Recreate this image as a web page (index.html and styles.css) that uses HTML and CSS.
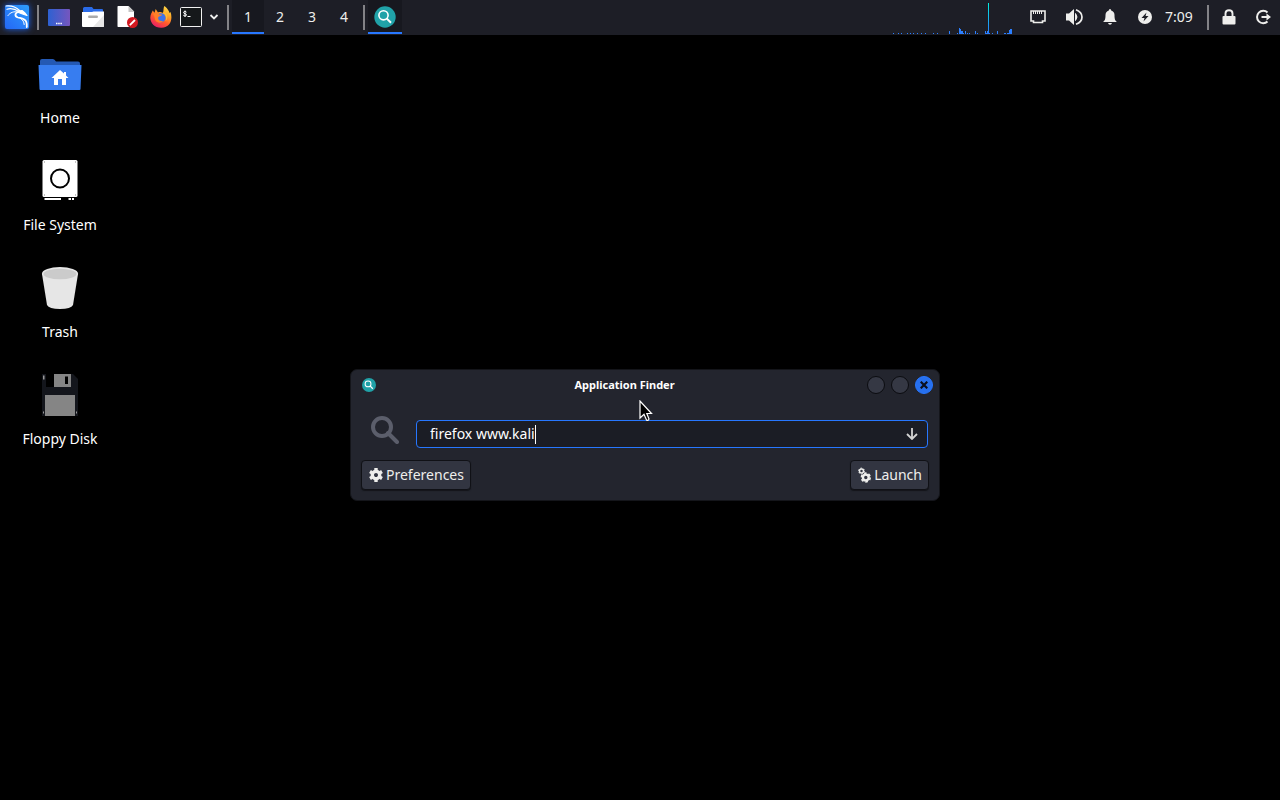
FILE: index.html
```html
<!DOCTYPE html>
<html lang="en">
<head>
<meta charset="utf-8">
<title>Desktop</title>
<link rel="stylesheet" href="styles.css">
</head>
<body>
<header class="panel">
  <button class="cell" aria-label="Applications menu">
    <svg class="menu-logo" width="34" height="34" viewBox="0 0 34 34">
      <defs><linearGradient id="lg" x1="0" y1="1" x2="1" y2="0"><stop offset="0" stop-color="#2467f5"/><stop offset="1" stop-color="#2d9dfc"/></linearGradient></defs>
      <rect x="5" y="5" width="24" height="24" rx="2" fill="url(#lg)"/>
      <g fill="none" stroke="#fff" stroke-linecap="round" stroke-linejoin="round">
        <path d="M6 6C11 5.500 16 7 19.500 10.500" stroke-width="1.200"/>
        <path d="M7 9.300C11 7.800 15 9 19 11.500" stroke-width="1.200"/>
        <path d="M8 15.500C10 12.500 14 11 18 12" stroke-width="1"/>
        <path d="M18 11L22 10.500L25 13L27 15.500L22.500 14L18.500 12.500" stroke-width="1.200" fill="#fff"/>
        <path d="M18.500 12C14.500 13 14.500 16.500 18 17.500C22 18.500 25 18.500 26.300 22C27 24 27 25.500 26.800 27" stroke-width="1.800"/>
        <path d="M20.500 18.500C23 20 24 22 24.200 24.500" stroke-width="1"/>
      </g>
    </svg>
  </button>
  <span class="sep"></span>
  <button class="cell" aria-label="Show desktop">
    <svg width="22" height="18" viewBox="0 0 22 18"><defs><linearGradient id="dg"><stop offset="0" stop-color="#2d61d2"/><stop offset="1" stop-color="#7656be"/></linearGradient></defs><rect width="22" height="17" y="1" rx="1" fill="url(#dg)"/><path d="M8 15.500h6" stroke="#fff" stroke-width="1.500" stroke-dasharray="1.500 .7"/></svg>
  </button>
  <button class="cell" aria-label="File manager">
    <svg width="22" height="20" viewBox="0 0 22 20"><path d="M1 6V1.500Q1 0 2.500 0H10L11.500 2H20Q21 2 21 3V7H1z" fill="#2a6be8"/><path d="M0 5H10L11.500 4.500H22V19Q22 20 21 20H1Q0 20 0 19z" fill="#fff"/><path d="M22 8V19Q22 20 21 20H11z" fill="#e7e7e7"/><rect x="6" y="8.500" width="10" height="2.500" rx="1.200" fill="#aaa"/></svg>
  </button>
  <button class="cell" aria-label="Text editor">
    <svg width="24" height="22" viewBox="-2 0 24 22"><path d="M1 0H11.500L17 5.500V21H1Q.5 21 .5 20V1Q.5 0 1 0z" fill="#fff"/><path d="M11.500 0L17.500 6H11.500z" fill="#c6c6c6"/><circle cx="15.500" cy="16.500" r="5.500" fill="#d31921"/><path d="M12.800 19.200L18 14" stroke="#fff" stroke-width="1.800"/></svg>
  </button>
  <button class="cell" aria-label="Firefox">
    <svg width="22" height="22" viewBox="0 0 22 22"><defs><linearGradient id="ff" x1=".85" y1="0" x2=".3" y2="1"><stop offset="0" stop-color="#ffe14c"/><stop offset=".35" stop-color="#ffa626"/><stop offset=".65" stop-color="#ff5a2c"/><stop offset="1" stop-color="#e91d67"/></linearGradient></defs><path d="M14.500 0C18 3 19 5 19.500 7L20.500 6C23 13 20.500 21.500 11.500 21.800C4.500 22 .5 17 .3 12C.2 8.500 2 6.500 2.700 4.500L4.500 6.700L5.700 3L8 6.500C10 5.500 12 6.500 12.500 7C14 6.500 13 2 14.500 0z" fill="url(#ff)"/><circle cx="11" cy="11.800" r="4.600" fill="#3f74e8"/><path d="M3 8C5 6.500 7.500 7 9 8.500H12C12 10.300 9 10 8.300 11.200C7.500 13.500 10 15.500 13 15C11.500 17.500 7 17 5.500 14.500C4.500 13 5 10.500 3 8z" fill="#ff7f28"/><path d="M12 6.800C16 8 17 12 15.500 15C18 13 18 9 15 6.500z" fill="#ffbd35"/></svg>
  </button>
  <button class="cell terminal" aria-label="Terminal">
    <svg width="22" height="20" viewBox="0 0 22 20"><rect x=".5" y=".5" width="21" height="19" rx="1" fill="#15181a" stroke="#f2f2f2"/><path d="M6.500 5.200C6 4 3.500 4.300 3.500 5.500C3.500 7 6.500 6.300 6.500 8C6.500 9.200 4 9.300 3.300 8.200M5 3.500V10M7.500 9.500H10.500" fill="none" stroke="#fff"/></svg>
  </button>
  <button class="cell chevron" aria-label="More terminals">
    <svg width="10" height="6" viewBox="0 0 10 6"><path d="M1.500 1L5 4.500L8.500 1" fill="none" stroke="#eee" stroke-width="1.800"/></svg>
  </button>
  <span class="sep"></span>
  <nav class="workspaces" aria-label="Workspaces">
    <button class="workspace active">1</button>
    <button class="workspace">2</button>
    <button class="workspace">3</button>
    <button class="workspace">4</button>
  </nav>
  <span class="sep"></span>
  <button class="cell active" aria-label="Application Finder window">
    <svg width="22" height="22" viewBox="0 0 22 22"><circle cx="11" cy="11" r="10.700" fill="#20a2a8"/><circle cx="9.500" cy="9.300" r="4.600" fill="none" stroke="#fff" stroke-width="1.600"/><path d="M12.600 12.400L17 16.800" stroke="#fff" stroke-width="2"/></svg>
  </button>
  <svg class="cpu-graph" width="120" height="35" viewBox="0 0 120 35" shape-rendering="crispEdges">
    <defs><linearGradient id="peak" x1="0" y1="0" x2="0" y2="1"><stop offset="0" stop-color="#00f0e0"/><stop offset="1" stop-color="#2779ff"/></linearGradient></defs>
    <path fill="#2b7fff" d="M1 33h1v1h-1zM6 33h1v1h-1zM9 33h1v1h-1zM15 33h1v1h-1zM18 33h1v1h-1zM21 33h1v1h-1zM25 33h1v1h-1zM29 33h1v1h-1zM33 33h1v1h-1zM41 33h1v1h-1zM45 33h1v1h-1zM57 31h1v3h-1zM65 33h1v1h-1zM67 28h1v6h-1zM68 29h1v5h-1zM69 31h2v3h-2zM71 33h1v1h-1zM73 31h1v3h-1zM75 33h1v1h-1zM77 33h1v1h-1zM83 31h1v3h-1zM85 33h1v1h-1zM93 31h1v3h-1zM94 33h1v1h-1zM95 31h1v3h-1zM97 33h1v1h-1zM100 33h1v1h-1zM105 31h1v3h-1zM112 33h2v1h-2zM115 33h2v1h-2zM117 30h1v4h-1zM118 29h2v5h-2z"/>
    <rect x="96" y="3" width="1" height="31" fill="url(#peak)"/>
  </svg>
  <div class="tray">
    <button class="cell wide" aria-label="Network"><svg width="16" height="14" viewBox="0 0 16 14"><path d="M1 1H15V11H12.500V12.500H3.500V11H1z" fill="none" stroke="#eeeeec" stroke-width="1.600"/><path d="M3.500 1V4M5.500 1V4M7.500 1V4M9.500 1V4M11.500 1V4" stroke="#eeeeec"/></svg></button>
    <button class="cell wide" aria-label="Volume"><svg width="18" height="18" viewBox="0 0 18 18"><path d="M1 5.500H4L9 1V17L4 12.500H1z" fill="#eeeeec"/><path d="M10.500 5.500Q13.500 9 10.500 12.500z" fill="#eeeeec" stroke="#eeeeec"/><path d="M11 1.700Q17 4 17 9T11 16.300" fill="none" stroke="#eeeeec" stroke-width="1.700"/></svg></button>
    <button class="cell wide" aria-label="Notifications"><svg width="14" height="16" viewBox="0 0 14 16"><path d="M7 0Q8.200 0 8.200 1.500Q11.500 2.500 11.500 6C11.500 10 12 11.500 14 13H0C2 11.500 2.500 10 2.500 6Q2.500 2.500 5.800 1.500Q5.800 0 7 0zM5 14H9Q8.500 15.700 7 15.700T5 14z" fill="#eeeeec"/></svg></button>
    <button class="cell" aria-label="Power"><svg width="14" height="14" viewBox="0 0 14 14"><circle cx="7" cy="7" r="7" fill="#eeeeec"/><path d="M8.500 2.500L3.500 8H6.500L5.500 11.500L10.500 6H7.500z" fill="#1d1e26"/></svg></button>
    <time class="clock">7:09</time>
    <span class="sep"></span>
    <button class="cell" aria-label="Lock screen"><svg width="14" height="16" viewBox="0 0 14 16"><rect x=".5" y="7" width="13" height="8.500" rx="1" fill="#eeeeec"/><path d="M3.500 8V4.500Q3.500 1.200 7 1.200T10.500 4.500V8" fill="none" stroke="#eeeeec" stroke-width="1.900"/></svg></button>
    <button class="cell" aria-label="Log out"><svg width="16" height="16" viewBox="0 0 16 16"><path d="M12.500 3.500A6.200 6.200 0 1 0 12.500 12.500" fill="none" stroke="#eeeeec" stroke-width="2"/><path d="M6.500 7H11.500V4.500L16 8L11.500 11.500V9H6.500z" fill="#eeeeec"/></svg></button>
  </div>
</header>

<main class="desktop">
  <ul class="shortcuts">
    <li><a class="shortcut" href="#home">
      <svg width="48" height="48" viewBox="0 0 48 48"><path d="M4 16V10Q4 8 6 8H17Q18.500 8 20 10.500H42Q44 10.500 44 12.500V18H4z" fill="#2459b4"/><path d="M2.500 14H18Q19 14 20 14H45.500L44.500 38Q44.500 39 43.500 39H4.500Q3.500 39 3.500 38z" fill="#377df0"/><path d="M24 19L28 22.500V21H30V24.500L32.500 27H30V34H26V28H22V34H18V27H15.500z" fill="#fff"/></svg>
      <span>Home</span></a></li>
    <li><a class="shortcut" href="#filesystem">
      <svg width="48" height="48" viewBox="0 0 48 48"><rect x="6.500" y="2" width="35" height="37" rx="1.500" fill="#fff"/><circle cx="24" cy="20.500" r="9" fill="none" stroke="#000" stroke-width="2"/><path d="M8.500 41H25M32.500 41H35M36 41H38" stroke="#fff" stroke-width="2"/><path d="M8 4h1M39 4h1M8 37h1M39 37h1" stroke="#888"/></svg>
      <span>File System</span></a></li>
    <li><a class="shortcut" href="#trash">
      <svg width="48" height="48" viewBox="0 0 48 48"><path d="M6 9L11 40Q13 44 24 44T37 40L42 9z" fill="#e6e6e6"/><ellipse cx="24" cy="8.500" rx="18" ry="6.500" fill="#e6e6e6"/><ellipse cx="24" cy="9" rx="16.500" ry="5.300" fill="#cbcbcb"/></svg>
      <span>Trash</span></a></li>
    <li><a class="shortcut" href="#floppy">
      <svg width="48" height="48" viewBox="0 0 48 48"><path d="M6 2H37L42 7V44H6z" fill="#14161c"/><path d="M10 2H18V15H10z" fill="#000"/><path d="M18 2H35V15H18zM9 23H39V44H9z" fill="#858585"/><path d="M29 4.500H32V12H29z" fill="#000"/><path d="M7 3.500h1.500v4H7zM7 39.500h1v2H7zM40 39.500h1v2h-1z" fill="#999"/></svg>
      <span>Floppy Disk</span></a></li>
  </ul>

  <section class="window" aria-labelledby="finder-title">
    <div class="titlebar">
      <svg width="14" height="14" viewBox="0 0 22 22"><circle cx="11" cy="11" r="11" fill="#20a2a8"/><circle cx="9.500" cy="9.300" r="4.600" fill="none" stroke="#fff" stroke-width="1.600"/><path d="M12.600 12.400L17 16.800" stroke="#fff" stroke-width="2"/></svg>
      <h1 class="title" id="finder-title">Application Finder</h1>
      <div class="controls">
        <button class="control" aria-label="Minimize"></button>
        <button class="control" aria-label="Maximize"></button>
        <button class="control close" aria-label="Close"><svg width="8" height="8" viewBox="0 0 8 8"><path d="M.7.7L7.300 7.300M7.300.7L.7 7.300" stroke="#0b1020" stroke-width="2.200"/></svg></button>
      </div>
    </div>
    <form class="finder">
      <div class="search-row">
        <svg class="search-icon" width="28" height="28" viewBox="0 0 28 28"><circle cx="11" cy="11" r="9" fill="none" stroke="#5b5e6b" stroke-width="4"/><path d="M17 17L26 26" stroke="#5b5e6b" stroke-width="4" stroke-linecap="round"/></svg>
        <div class="field">
          <input class="command" type="text" aria-label="Command" value="firefox www.kali" spellcheck="false"><span class="caret"></span>
          <button class="expand" type="button" aria-label="Show applications"><svg width="12" height="12" viewBox="0 0 12 12"><path d="M6 0V11M1 6L6 11L11 6" fill="none" stroke="#d3d3d3" stroke-width="1.800"/></svg></button>
        </div>
      </div>
      <div class="actions">
        <button class="action" type="button">
          <svg width="14" height="14" viewBox="-7 -7 14 14"><circle r="3.700" fill="none" stroke="#eeeeec" stroke-width="3.400"/><path d="M0-7V-4M0 7V4M-6-3.500L-4-2.300M6 3.500L4 2.300M-6 3.500L-4 2.300M6-3.500L4-2.300" stroke="#eeeeec" stroke-width="3.400"/></svg>
          Preferences</button>
        <button class="action" type="button">
          <svg width="13" height="16" viewBox="0 0 13 16"><g fill="none" stroke="#eeeeec"><circle cx="3.500" cy="4" r="2" stroke-width="1.500"/><circle cx="3.500" cy="4" r="2.900" stroke-width="1" stroke-dasharray="1.600 1.440"/><circle cx="7.800" cy="10.500" r="2.900" stroke-width="2.400"/><circle cx="7.800" cy="10.500" r="4.400" stroke-width="1.600" stroke-dasharray="2.600 2"/></g></svg>
          Launch</button>
      </div>
    </form>
  </section>

  <svg class="pointer" width="14" height="22" viewBox="0 0 14 22"><path d="M1 1V18L5 14.200L7.500 20Q9 21.300 10 19L7.800 13.500H12.500z" fill="#000" stroke="#fff" stroke-width="1.200"/></svg>
</main>
</body>
</html>
```

FILE: styles.css
```css
* {
  box-sizing: border-box;
}

body {
  margin: 0;
  min-height: 100vh;
  display: flex;
  flex-direction: column;
  background: #000;
  color: #eeeeec;
  font: 14px/20px "Noto Sans", "Open Sans", sans-serif;
}

button {
  margin: 0;
  padding: 0;
  border: 0;
  background: none;
  color: inherit;
  font: inherit;
}

svg {
  display: block;
  flex: none;
}

.panel {
  display: flex;
  height: 35px;
  padding-bottom: 1px;
  background: #1d1e26;
}

.cell {
  display: flex;
  flex: none;
  align-items: center;
  justify-content: center;
  width: 34px;
}

.cell.terminal {
  width: 26px;
}

.cell.chevron {
  width: 20px;
}

.cell.wide {
  width: 36px;
}

.menu-logo {
  filter: drop-shadow(0 0 3px #1c63f0);
}

.sep {
  flex: none;
  width: 2px;
  margin: 5px 3px 4px;
  background: #838387;
}

.workspaces {
  display: flex;
}

.workspace {
  width: 32px;
}

.active {
  background: #17181f;
  box-shadow: inset 0 -2px #2777ff;
}

.cpu-graph {
  margin-left: auto;
  margin-right: 8px;
}

.tray {
  display: flex;
}

.clock {
  width: 42px;
  padding-left: 3px;
  line-height: 34px;
}

.desktop {
  position: relative;
  flex: 1;
}

.shortcuts {
  display: flex;
  flex-direction: column;
  gap: 30px;
  width: 120px;
  margin: 0;
  padding: 16px 0 0;
  list-style: none;
}

.shortcut {
  display: flex;
  flex-direction: column;
  align-items: center;
  gap: 9px;
  color: #fff;
  text-decoration: none;
}

.window {
  position: absolute;
  top: 334px;
  left: 350px;
  width: 590px;
  border: 1px solid #14151a;
  border-radius: 7px;
  background: #23252e;
}

.titlebar {
  display: flex;
  align-items: center;
  height: 30px;
  padding: 0 6px 0 11px;
}

.title {
  flex: 1;
  margin: 0;
  padding-left: 6px;
  color: #fff;
  font-size: 11px;
  line-height: 16px;
  text-align: center;
}

.controls {
  display: flex;
  gap: 6px;
}

.control {
  display: flex;
  align-items: center;
  justify-content: center;
  width: 18px;
  height: 18px;
  border: 1px solid #0b0c10;
  border-radius: 50%;
  background: #353844;
}

.control.close {
  border-color: #2777ff;
  background: #2770ee;
}

.finder {
  padding: 16px 10px 10px;
}

.search-row {
  display: flex;
  padding-left: 10px;
  gap: 17px;
}

.field {
  display: flex;
  flex: 1;
  align-items: center;
  height: 28px;
  margin: 4px 1px 0 0;
  padding-left: 13px;
  border: 1px solid #2777ff;
  border-radius: 4px;
  background: #1b1d25;
}

.command {
  field-sizing: content;
  padding: 0;
  border: 0;
  outline: 0;
  background: none;
  color: #fff;
  font: inherit;
}

.caret {
  width: 1px;
  height: 19px;
  background: #fff;
}

.expand {
  margin-left: auto;
  padding: 4px 9px;
}

.actions {
  display: flex;
  justify-content: space-between;
  margin-top: 12px;
}

.action {
  display: flex;
  align-items: center;
  gap: 3px;
  height: 30px;
  padding: 0 6px 0 7px;
  border: 1px solid #101116;
  border-radius: 4px;
  background: #323541;
  box-shadow: 0 1px 1px #14151a;
}

.pointer {
  position: absolute;
  top: 365px;
  left: 639px;
}
```
